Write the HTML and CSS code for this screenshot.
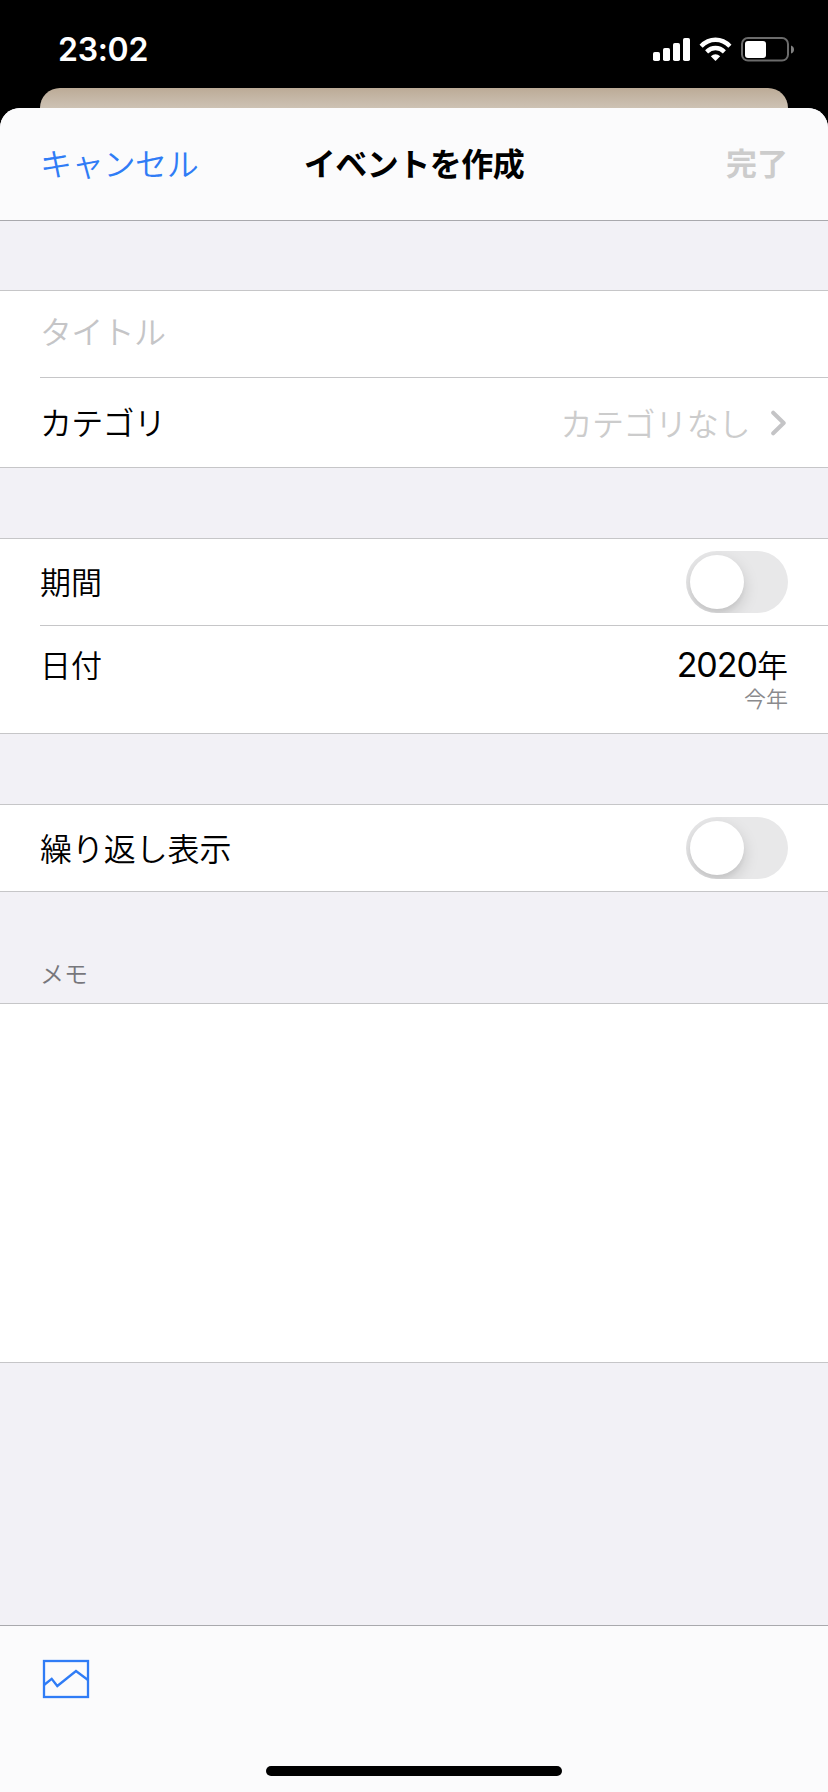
FILE: index.html
```html
<!DOCTYPE html>
<html lang="ja">
<head>
<meta charset="utf-8">
<title>イベントを作成</title>
<link rel="stylesheet" href="styles.css">
</head>
<body>
<div class="status">
  <time class="clock">23:02</time>
  <svg class="signals" width="144" height="28" viewBox="0 0 144 28">
    <g fill="#fff">
      <rect x="0" y="16" width="7" height="9" rx="1.8"/>
      <rect x="10" y="12" width="7" height="13" rx="1.8"/>
      <rect x="20" y="7" width="7" height="18" rx="1.8"/>
      <rect x="30" y="2" width="7" height="23" rx="1.8"/>
      <path d="M57.8 20.2Q62.5 16.4 67.2 20.2L62.5 25Z"/>
    </g>
    <g fill="none" stroke="#fff" stroke-width="4.4">
      <path d="M48.1 10.2C56.4 1.6 68.6 1.6 76.9 10.2"/>
      <path d="M53.6 15.8C58.9 10.8 66.1 10.8 71.4 15.8"/>
    </g>
    <rect x="89" y="2" width="46" height="22.6" rx="6" fill="none" stroke="#6b6b6b" stroke-width="2"/>
    <rect x="92" y="5" width="21" height="17" rx="3" fill="#fff"/>
    <path d="M138 9.5Q141 10.5 141 13.5T138 17.5Z" fill="#808080"/>
  </svg>
</div>
<div class="back-card"></div>
<main class="sheet">
  <header class="nav">
    <span class="cancel">キャンセル</span>
    <h1 class="title">イベントを作成</h1>
    <span class="done">完了</span>
  </header>
  <section class="group">
    <div class="row row-title"><span class="kana placeholder">タイトル</span></div>
    <div class="row row-category">
      <span class="kana">カテゴリ</span>
      <span class="value-link"><span class="value">カテゴリなし</span>
        <svg class="chevron" width="16" height="26" viewBox="0 0 16 26"><path d="M2.2 2.7L12.7 13L2.2 23.3" fill="none" stroke="#c4c4c6" stroke-width="4" stroke-linecap="round" stroke-linejoin="round"/></svg>
      </span>
    </div>
  </section>
  <section class="group">
    <div class="row"><span class="kanji">期間</span><span class="switch"><i class="knob"></i></span></div>
    <div class="row row-date">
      <span class="kanji">日付</span>
      <div class="date"><span class="year"><span class="digits">2020</span>年</span><span class="relative-year">今年</span></div>
    </div>
  </section>
  <section class="group">
    <div class="row"><span class="repeat">繰り返し表示</span><span class="switch"><i class="knob"></i></span></div>
  </section>
  <h2 class="memo-label">メモ</h2>
  <section class="memo"></section>
  <footer class="toolbar">
    <svg class="photo" width="48" height="40" viewBox="0 0 48 40" fill="none" stroke="#2f7cf6" stroke-width="2.3"><rect x="2" y="2" width="44" height="36"/><path d="M2 26L9.7 19.8L15.3 27L34 12L46 21"/></svg>
    <div class="home"></div>
  </footer>
</main>
</body>
</html>
```

FILE: styles.css
```css
* { box-sizing: border-box; }

body {
  margin: 0;
  width: 828px;
  height: 1792px;
  display: flex;
  flex-direction: column;
  overflow: hidden;
  background: #000;
  color: #000;
  font: 350 32px/40px "Noto Sans CJK JP", sans-serif;
}

h1, h2 { margin: 0; }

.status {
  height: 88px;
  padding: 0 34px 0 58px;
  display: flex;
  justify-content: space-between;
}

.clock {
  padding-top: 30px;
  color: #fff;
  font: 600 32px/40px Inter, sans-serif;
  letter-spacing: -0.3px;
}

.signals {
  width: 144px;
  margin: 36px -3px 0 0;
}

.back-card {
  height: 20px;
  margin: 0 40px;
  border-radius: 20px 20px 0 0;
  background: linear-gradient(#bcab97, #cdc2b4);
}

.sheet {
  flex: 1;
  display: flex;
  flex-direction: column;
  overflow: hidden;
  border-radius: 20px 20px 0 0;
  background: #f2f1f6;
}

.nav {
  height: 113px;
  padding: 0 40px 4px;
  display: grid;
  grid-template-columns: 1fr auto 1fr;
  align-items: center;
  border-bottom: 1px solid #a9a9ad;
  background: #fbfbfc;
}

.cancel { color: #2f7cf6; letter-spacing: -0.3px; }
.title { font-size: 32px; font-weight: 700; letter-spacing: -0.5px; }
.done { justify-self: end; color: #ccc; font-weight: 700; font-size: 31px; }

.group {
  margin-top: 69px;
  border-top: 1px solid #c6c6c8;
  border-bottom: 1px solid #c6c6c8;
  background: #fff;
}

.group + .group { margin-top: 70px; }

.row {
  height: 86px;
  margin-left: 40px;
  padding-right: 40px;
  display: flex;
  align-items: center;
  justify-content: space-between;
}

.row > span:first-child { padding-bottom: 3px; }
.row + .row { border-top: 1px solid #c6c6c8; }
.row-title { padding-bottom: 6px; }
.row-category { height: 90px; }
.kana { letter-spacing: -0.7px; }
.kanji { font-size: 31px; }
.repeat { letter-spacing: -0.1px; }
.placeholder { color: #c5c5c7; }

.value-link {
  display: flex;
  align-items: center;
  gap: 21px;
}

.value { padding-bottom: 2px; color: #ccc; letter-spacing: -0.4px; }
.chevron { margin-right: 1px; }

.switch {
  width: 102px;
  height: 62px;
  padding: 4px;
  border-radius: 31px;
  overflow: hidden;
  background: #e8e8e9;
}

.knob {
  display: block;
  width: 54px;
  height: 54px;
  border-radius: 50%;
  background: #fff;
  box-shadow: 0 6px 16px rgba(0, 0, 0, 0.15), 0 4px 4px rgba(0, 0, 0, 0.04);
}

.row-date {
  height: 108px;
  padding-top: 18px;
  align-items: flex-start;
}

.date {
  display: flex;
  flex-direction: column;
  align-items: flex-end;
}

.year { height: 40px; font-size: 31px; }
.digits { font: 400 34px/40px Inter, sans-serif; letter-spacing: -1px; }

.relative-year {
  color: #8a8a8d;
  font-size: 22px;
  line-height: 26px;
}

.memo-label {
  height: 111px;
  padding: 65px 40px 0;
  color: #77777c;
  font-size: 24px;
  font-weight: 350;
  line-height: 32px;
}

.memo {
  height: 360px;
  border-top: 1px solid #c6c6c8;
  border-bottom: 1px solid #c6c6c8;
  background: #fff;
}

.toolbar {
  height: 167px;
  margin-top: auto;
  padding: 33px 40px 16px;
  display: flex;
  flex-direction: column;
  justify-content: space-between;
  border-top: 1px solid #a9a9ad;
  background: #fbfbfc;
}

.photo { margin-left: 2px; }

.home {
  width: 296px;
  height: 10px;
  align-self: center;
  border-radius: 5px;
  background: #000;
}
```
